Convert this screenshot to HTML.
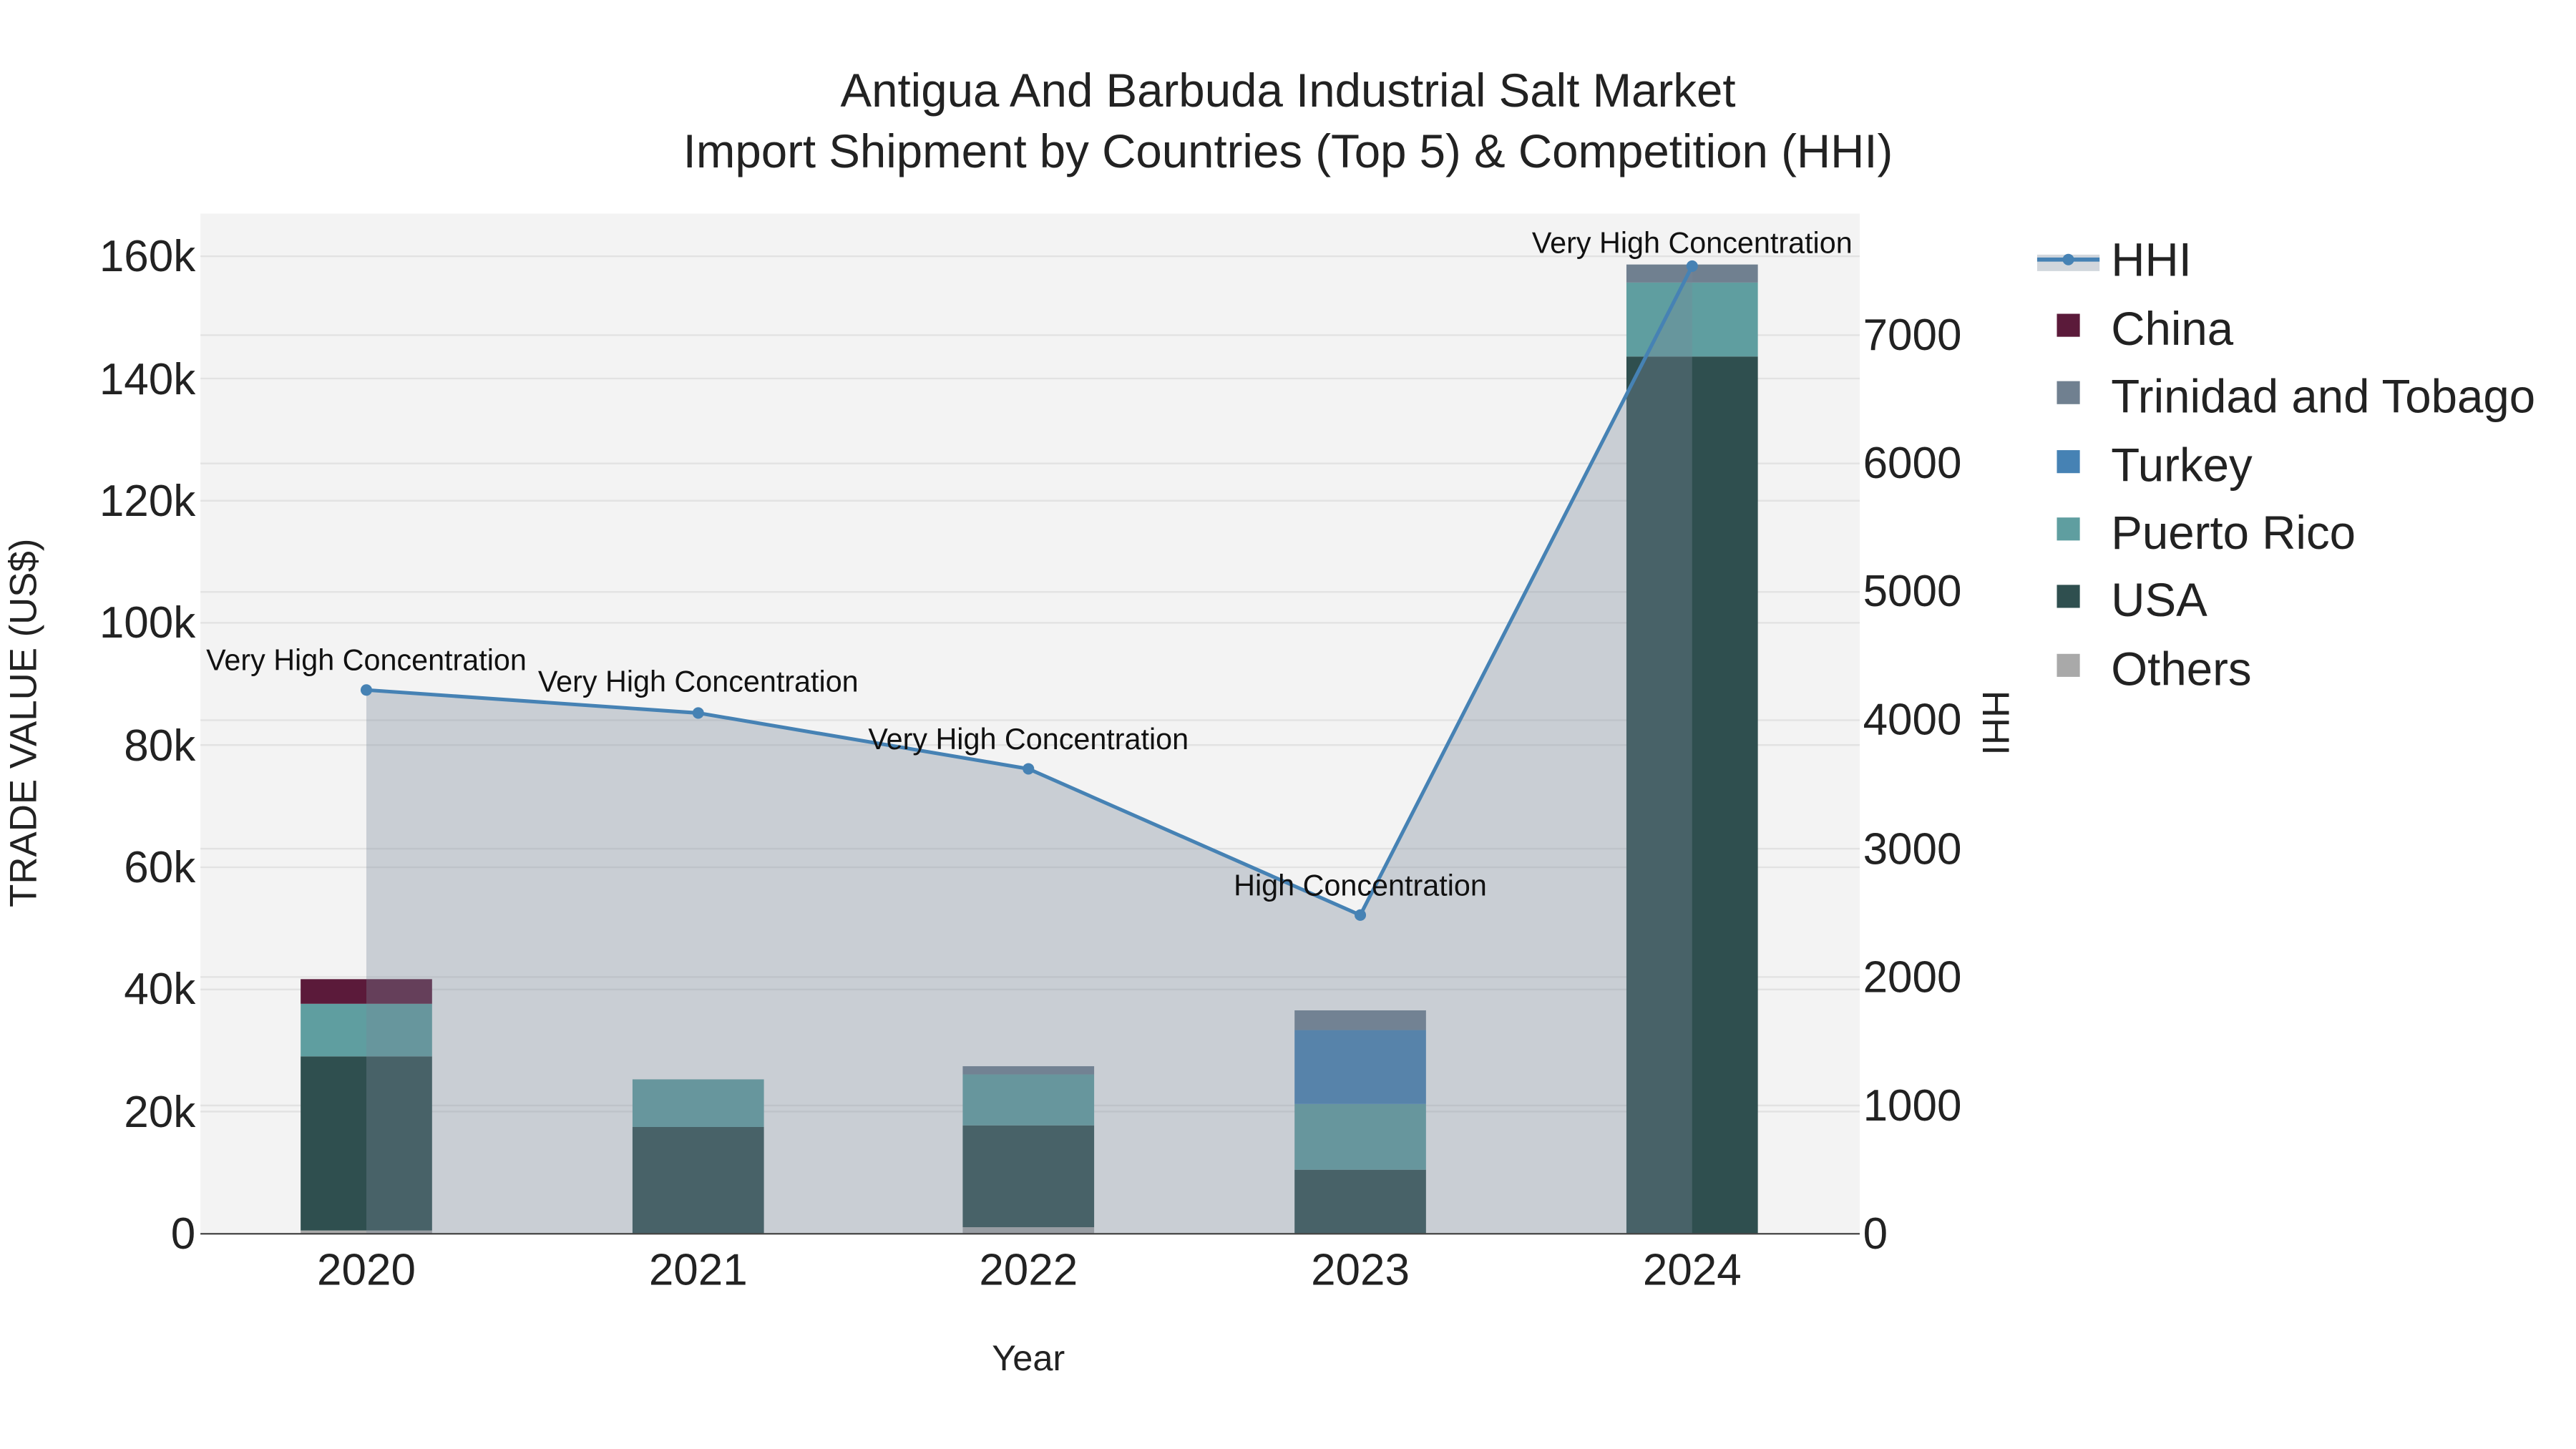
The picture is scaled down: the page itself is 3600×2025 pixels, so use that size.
<!DOCTYPE html>
<html><head><meta charset="utf-8"><style>html,body{margin:0;padding:0;background:#fff}svg{display:block}</style></head><body>
<svg width="3600" height="2025" viewBox="0 0 1568 882" preserveAspectRatio="none" xmlns="http://www.w3.org/2000/svg" font-family="Liberation Sans, sans-serif">
<rect width="1568" height="882" fill="#fff"/>
<rect x="122" y="130" width="1010" height="621" fill="#f3f3f3"/>
<g stroke="#e2e2e2" stroke-width="1">
<line x1="122" x2="1132" y1="676.6" y2="676.6"/><line x1="122" x2="1132" y1="602.3" y2="602.3"/><line x1="122" x2="1132" y1="527.9" y2="527.9"/><line x1="122" x2="1132" y1="453.5" y2="453.5"/><line x1="122" x2="1132" y1="379.1" y2="379.1"/><line x1="122" x2="1132" y1="304.8" y2="304.8"/><line x1="122" x2="1132" y1="230.4" y2="230.4"/><line x1="122" x2="1132" y1="156" y2="156"/>
<line x1="122" x2="1132" y1="672.9" y2="672.9"/><line x1="122" x2="1132" y1="594.7" y2="594.7"/><line x1="122" x2="1132" y1="516.6" y2="516.6"/><line x1="122" x2="1132" y1="438.4" y2="438.4"/><line x1="122" x2="1132" y1="360.3" y2="360.3"/><line x1="122" x2="1132" y1="282.1" y2="282.1"/><line x1="122" x2="1132" y1="204" y2="204"/>
</g>
<g>
<rect x="183" y="749" width="80" height="2" fill="#a9a9a9"/>
<rect x="183" y="643" width="80" height="106" fill="#2f4f4f"/>
<rect x="183" y="611" width="80" height="32" fill="#5f9ea0"/>
<rect x="183" y="596" width="80" height="15" fill="#5b1a3a"/>
<rect x="385" y="686" width="80" height="65" fill="#2f4f4f"/>
<rect x="385" y="657" width="80" height="29" fill="#5f9ea0"/>
<rect x="586" y="747" width="80" height="4" fill="#a9a9a9"/>
<rect x="586" y="685" width="80" height="62" fill="#2f4f4f"/>
<rect x="586" y="654" width="80" height="31" fill="#5f9ea0"/>
<rect x="586" y="649" width="80" height="5" fill="#708090"/>
<rect x="788" y="712" width="80" height="39" fill="#2f4f4f"/>
<rect x="788" y="672" width="80" height="40" fill="#5f9ea0"/>
<rect x="788" y="627" width="80" height="45" fill="#4682b4"/>
<rect x="788" y="615" width="80" height="12" fill="#708090"/>
<rect x="990" y="217" width="80" height="534" fill="#2f4f4f"/>
<rect x="990" y="172" width="80" height="45" fill="#5f9ea0"/>
<rect x="990" y="161" width="80" height="11" fill="#708090"/>
</g>
<polygon points="223,751 223,420 425,434 626,468 828,557 1030,162 1030,751" fill="rgb(119,136,153)" fill-opacity="0.34"/>
<line x1="122" x2="1132" y1="751" y2="751" stroke="#444" stroke-width="1"/>
<polyline points="223,420 425,434 626,468 828,557 1030,162" fill="none" stroke="#4682b4" stroke-width="2.2"/>
<g fill="#4682b4"><circle cx="223" cy="420" r="3.5"/><circle cx="425" cy="434" r="3.5"/><circle cx="626" cy="468" r="3.5"/><circle cx="828" cy="557" r="3.5"/><circle cx="1030" cy="162" r="3.5"/></g>
<g font-size="18" fill="#111" text-anchor="middle">
<text x="223" y="408">Very High Concentration</text>
<text x="425" y="421">Very High Concentration</text>
<text x="626" y="456">Very High Concentration</text>
<text x="828" y="545">High Concentration</text>
<text x="1030" y="154">Very High Concentration</text>
</g>
<g font-size="28.5" fill="#222" text-anchor="middle">
<text x="784" y="65">Antigua And Barbuda Industrial Salt Market</text>
<text x="784" y="102">Import Shipment by Countries (Top 5) &amp; Competition (HHI)</text>
</g>
<g font-size="27" fill="#222" text-anchor="end">
<text x="119" y="760">0</text><text x="119" y="686">20k</text><text x="119" y="611">40k</text><text x="119" y="537">60k</text><text x="119" y="463">80k</text><text x="119" y="388">100k</text><text x="119" y="314">120k</text><text x="119" y="240">140k</text><text x="119" y="165">160k</text>
</g>
<g font-size="27" fill="#222" text-anchor="start">
<text x="1134" y="760">0</text><text x="1134" y="682">1000</text><text x="1134" y="604">2000</text><text x="1134" y="526">3000</text><text x="1134" y="447">4000</text><text x="1134" y="369">5000</text><text x="1134" y="291">6000</text><text x="1134" y="213">7000</text>
</g>
<g font-size="27" fill="#222" text-anchor="middle">
<text x="223" y="782">2020</text><text x="425" y="782">2021</text><text x="626" y="782">2022</text><text x="828" y="782">2023</text><text x="1030" y="782">2024</text>
</g>
<text x="626" y="834" font-size="22" fill="#222" text-anchor="middle">Year</text>
<text transform="translate(22,440) rotate(-90)" font-size="23" fill="#222" text-anchor="middle">TRADE VALUE (US$)</text>
<text transform="translate(1207,440) rotate(90)" font-size="23" fill="#222" text-anchor="middle">HHI</text>
<rect x="1240" y="155" width="38" height="10" fill="rgb(119,136,153)" fill-opacity="0.34"/>
<line x1="1240" x2="1278" y1="158" y2="158" stroke="#4682b4" stroke-width="2.5"/>
<circle cx="1259" cy="158" r="3.5" fill="#4682b4"/>
<rect x="1252" y="191" width="14" height="14" fill="#5b1a3a"/>
<rect x="1252" y="232" width="14" height="14" fill="#708090"/>
<rect x="1252" y="274" width="14" height="14" fill="#4682b4"/>
<rect x="1252" y="315" width="14" height="14" fill="#5f9ea0"/>
<rect x="1252" y="356" width="14" height="14" fill="#2f4f4f"/>
<rect x="1252" y="398" width="14" height="14" fill="#a9a9a9"/>
<g font-size="28.5" fill="#222">
<text x="1285" y="168">HHI</text><text x="1285" y="210">China</text><text x="1285" y="251">Trinidad and Tobago</text><text x="1285" y="293">Turkey</text><text x="1285" y="334">Puerto Rico</text><text x="1285" y="375">USA</text><text x="1285" y="417">Others</text>
</g>
</svg>
</body></html>
